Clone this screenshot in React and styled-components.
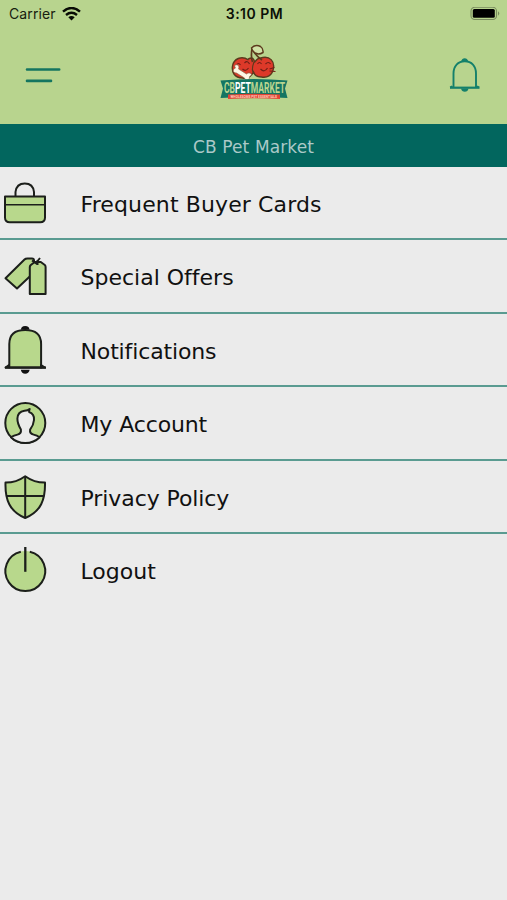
import React from 'react';
import styled, { createGlobalStyle } from 'styled-components';

const GlobalStyle = createGlobalStyle`
  * { box-sizing: border-box; }
  body { margin: 0; background: #ebebeb; }
`;

const Screen = styled.main`
  width: 507px;
  height: 900px;
  display: flex;
  flex-direction: column;
  overflow: hidden;
  background: #ebebeb;
  font-family: Verdana, 'DejaVu Sans', sans-serif;
`;

const Header = styled.header`
  height: 124px;
  flex: none;
  background: #b8d48e;
`;

const StatusBar = styled.div`
  height: 28px;
  display: grid;
  grid-template-columns: 1fr auto 1fr;
  align-items: center;
  padding: 0 7px 0 9px;
  font-family: Inter, sans-serif;
  font-size: 14px;
  line-height: 28px;
  color: #17200f;
`;

const Carrier = styled.div`
  display: flex;
  align-items: center;
  gap: 6px;
  letter-spacing: 0.1px;
`;

const Clock = styled.time`
  font-weight: 600;
  letter-spacing: 0.5px;
  color: #0b1007;
`;

const Battery = styled.div`
  display: flex;
  justify-content: flex-end;
`;

const NavBar = styled.nav`
  height: 96px;
  display: flex;
  justify-content: space-between;
  padding: 12px 24px 0 24px;
`;

const IconButton = styled.button`
  width: 38px;
  height: 70px;
  padding: 0;
  border: 0;
  background: none;
  display: flex;
`;

const TitleBar = styled.h1`
  height: 43px;
  flex: none;
  margin: 0;
  background: #02665e;
  color: #abc9c8;
  font-size: 17px;
  font-weight: 400;
  letter-spacing: 0.12px;
  line-height: 46px;
  text-align: center;
`;

const Menu = styled.ul`
  margin: 0;
  padding: 0;
  list-style: none;
`;

const MenuItem = styled.li`
  height: 73.4px;
  display: flex;
  border-bottom: ${({ $last }) => ($last ? '0' : '2px solid #5a9b91')};
`;

const ItemIcon = styled.svg`
  width: 50px;
  height: 72px;
  flex: none;
  fill: #b8d88c;
  stroke: #1c1f1b;
  stroke-width: 2;
  stroke-linejoin: round;
`;

const ItemLabel = styled.span`
  margin-left: 30.5px;
  color: #111;
  font-size: 22px;
  letter-spacing: ${({ $tracking }) => $tracking}px;
  font-variant-ligatures: none;
  line-height: 76px;
  white-space: nowrap;
`;

const WifiIcon = () => (
  <svg width="19" height="15" viewBox="0 0 19 15" fill="none" stroke="#080b05" strokeWidth="2.5">
    <path d="M1 4.600Q9.500-2.500 18 4.600M4 7.900q5.500-4.200 11 0" />
    <path d="M6.300 10.200q3.200-2.200 6.400 0L9.500 13.500z" fill="#080b05" stroke="none" />
  </svg>
);

const BatteryIcon = () => (
  <svg width="30" height="14" viewBox="0 0 30 14">
    <rect x="1" y=".3" width="25.5" height="12.2" rx="3.7" fill="none" stroke="#788b5d" strokeWidth="1.1" />
    <rect x="2.8" y="2" width="22" height="8.800" rx="1.5" fill="#000" />
    <path d="M28 4.300q2.500 2.200 0 4.400z" fill="#788b5d" />
  </svg>
);

const MenuLines = () => (
  <svg width="38" height="70" viewBox="0 0 38 70" stroke="#147560" strokeWidth="2.6" strokeLinecap="round">
    <path d="M3 29.500h32.200M3 40.900h24" />
  </svg>
);

const AlertBell = () => (
  <svg width="38" height="70" viewBox="0 0 38 70" fill="none" stroke="#14806b" strokeWidth="1.9">
    <path d="M8.500 47V33.500C8.500 26 13 21.300 19.800 21.300S31 26 31 33.500V47M5.200 47.500l2-1.300M34 47.500l-2-1.300" />
    <path d="M5 47.700H34.500" strokeWidth="2.200" />
    <path d="M16 21.600q1-3.400 3.700-3.400t3.700 3.400zM16 48.500h7.500q-.7 3.300-3.700 3.300t-3.800-3.300z" fill="#14806b" stroke="none" />
  </svg>
);

const Logo = () => (
  <svg width="69" height="62" viewBox="-0.500 0 69 62" role="img" aria-label="CB Pet Market">
    <g stroke="#5c3a1d" strokeWidth="1.4">
      <path d="M29 20c-1-1 1-2 3-2s3 3 3 4 2-4 6-4c10-3 14 4 13 10-1 8-7 10-12 9-4 0-7-2-8-5-2 4-6 7-11 6-8 0-11-6-10-12 1-7 9-11 16-6z" fill="#dd3929" />
      <path d="M34.500 22q-3.500 9 .5 12" fill="none" strokeWidth="1.100" />
      <path d="M33 22Q31 16 32.700 8M33.500 10q2 5 9 10" fill="none" strokeWidth="1.700" />
      <path d="M32 8q4-4 9-1.500 3 2 2.500 6-4 2.500-8 .5-3-2-3.500-5z" fill="#d0e2a7" strokeWidth="1.500" />
    </g>
    <path d="M17 25q2-3 4 0M25 23q3-3 5 1M23 29q3 3 6-1M38 24q2-3 4 0M46 24q3-3 5 0M41 29q4 4 7-1M50 29l5-1.500M50 31l6 .5" fill="none" stroke="#702017" strokeWidth="1.200" />
    <path d="M16 25c3-1 4 2 3 4l8 5c2-2 5-1 5 1-1 1-2 1-2 2 0 4-4 4-5 1l-8-5c-4 0-4-4-1-5-1-1-1-3 0-3z" fill="#fff6e4" stroke="#7c6348" strokeWidth=".6" />
    <path d="M1 40.500q33.500-3 67 0l-2.500 8 2.500 9.500q-33.500-2-67 0l2.500-9.500z" fill="#147562" />
    <path d="M8.500 54.500q26-1.500 52 0v4.500q-26-1.500-52 0z" fill="#e44334" />
    <g fontFamily="Roboto, sans-serif" fontWeight="700">
      <text transform="translate(4.500 53) scale(.57 1)" fontSize="15" fill="#b9d48f">
        CB<tspan fill="#fff">PET</tspan>MARKET
      </text>
      <text transform="translate(11 57.800) scale(.97 1)" fontSize="3.400" fill="#ffd0be">WHOLESOME PET ESSENTIALS</text>
    </g>
  </svg>
);

const icons = {
  bag: (
    <>
      <path d="M15.500 29v-4q1-8.500 9.300-8.500T34 25v4" fill="none" />
      <path d="M5 29.400h40v21q0 4.800-4.800 4.800H9.800Q5 55.200 5 50.400z" />
      <path d="M5 37.700h40" strokeWidth="1.500" />
    </>
  ),
  tags: (
    <>
      <path d="M5.500 38.200L24.500 19.500q1-1 3-1H32q2 0 2 2v12L17 48.500z" />
      <path d="M29.800 54V27q0-1 1-2l4-3h6l4 3q.8.800.8 2v27z" />
      <path d="M32 20.500l5 3.500M40 18l-4 5M37.500 20v5" strokeWidth="2" />
    </>
  ),
  bell: (
    <>
      <path d="M9.300 53.500V30q0-14 15.900-14t15.900 14v23.500z" />
      <path d="M5.500 53.500l3.500-2.500v2.500zM45 53.500L41 51v2.500z" fill="#1c1f1b" />
      <path d="M5 53.700h41" strokeWidth="2.300" />
      <path d="M21 15.500q0-3.500 4.200-3.500t4.200 3.500zM20.800 55.800h8.900q-1 4-4.500 4t-4.400-4z" fill="#111" stroke="none" />
    </>
  ),
  account: (
    <>
      <circle cx="25.300" cy="36" r="20" />
      <path d="M11 50.200q3-1.800 6.500-2.600 4-1 3.400-5-3.600-6-3.500-11Q17.500 25 24.500 23.800q3.500 0 5.200-1.800-.8 2-.5 3Q34.500 27 34 33q-.4 5-3.900 9.600-.7 4 3.500 5 3.400.8 6 2.600Q34 56 25.300 56T11 50.200z" fill="#ebebeb" />
    </>
  ),
  shield: (
    <>
      <path d="M25.200 15.200q-9 6.500-19.700 6.400C5 38.500 9.500 50.500 25.200 57 41 50.500 45.400 38.500 45 21.600q-10.700.1-19.800-6.400z" />
      <path d="M25.200 15.500V57M6.800 35.100h36.800" />
    </>
  ),
  power: (
    <>
      <circle cx="25.300" cy="37.300" r="20.300" stroke="none" />
      <path d="M20.800 17.700a19.900 19.900 0 1 0 9 0" />
      <path d="M25.300 13V37.800" strokeWidth="2.300" />
    </>
  ),
};

const items = [
  { icon: 'bag', label: 'Frequent Buyer Cards', tracking: 0.12 },
  { icon: 'tags', label: 'Special Offers', tracking: 0 },
  { icon: 'bell', label: 'Notifications', tracking: -0.14 },
  { icon: 'account', label: 'My Account', tracking: -0.12 },
  { icon: 'shield', label: 'Privacy Policy', tracking: -0.08 },
  { icon: 'power', label: 'Logout', tracking: 0 },
];

export default function App() {
  return (
    <>
      <GlobalStyle />
      <Screen>
        <Header>
          <StatusBar>
            <Carrier>Carrier <WifiIcon /></Carrier>
            <Clock>3:10 PM</Clock>
            <Battery><BatteryIcon /></Battery>
          </StatusBar>
          <NavBar>
            <IconButton aria-label="Menu"><MenuLines /></IconButton>
            <Logo />
            <IconButton aria-label="Notifications"><AlertBell /></IconButton>
          </NavBar>
        </Header>
        <TitleBar>CB Pet Market</TitleBar>
        <Menu>
          {items.map(({ icon, label, tracking }, index) => (
            <MenuItem key={label} $last={index === items.length - 1}>
              <ItemIcon viewBox="0 0 50 72" aria-hidden="true">{icons[icon]}</ItemIcon>
              <ItemLabel $tracking={tracking}>{label}</ItemLabel>
            </MenuItem>
          ))}
        </Menu>
      </Screen>
    </>
  );
}
